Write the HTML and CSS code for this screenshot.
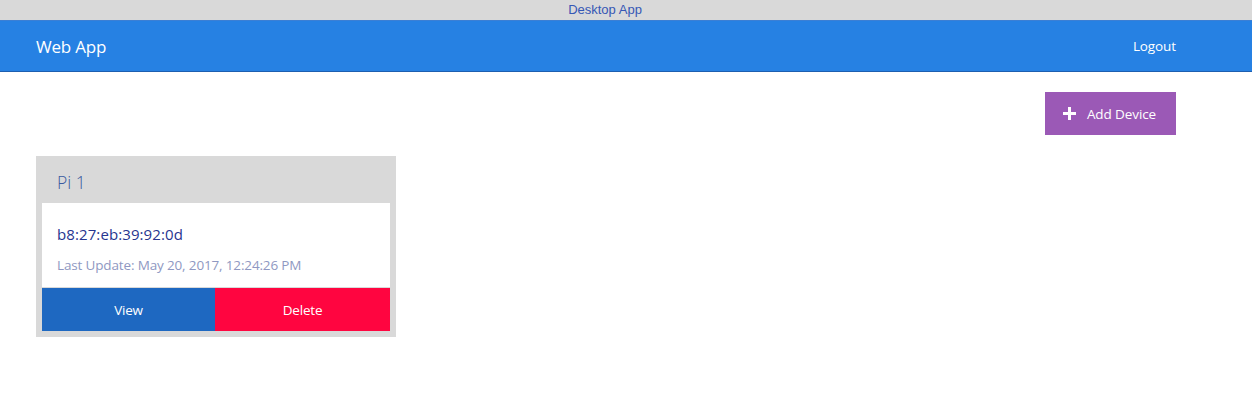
FILE: index.html
```html
<!DOCTYPE html>
<html>
<head>
<meta charset="utf-8">
<link rel="stylesheet" href="styles.css">
</head>
<body>
<div class="titlebar"><span>Desktop App</span></div>
<nav class="navbar">
  <span class="brand">Web App</span>
  <span class="logout">Logout</span>
</nav>
<main class="content">
  <div class="toolbar">
    <button class="add-btn">
      <svg width="13" height="13" viewBox="0 0 13 13"><path d="M5 0h3v5h5v3H8v5H5V8H0V5h5z" fill="#fff"/></svg>
      <span>Add Device</span>
    </button>
  </div>
  <div class="cards">
    <div class="card">
      <div class="card-title">Pi 1</div>
      <div class="card-body">
        <div class="mac">b8:27:eb:39:92:0d</div>
        <div class="updated">Last Update: May 20, 2017, 12:24:26 PM</div>
      </div>
      <div class="card-actions">
        <button class="btn view">View</button>
        <button class="btn delete">Delete</button>
      </div>
    </div>
  </div>
</main>
</body>
</html>
```
FILE: styles.css
```css
* { box-sizing: border-box; }
html, body { margin: 0; padding: 0; background: #fff; }
body { font-family: "Source Sans Pro", "Open Sans", "Noto Sans", sans-serif; }
.titlebar {
  height: 21px;
  background: #d9d9d9;
  border-bottom: 1px solid #3b7fd4;
  text-align: center;
  font-family: "Liberation Sans", Arial, sans-serif;
  font-size: 13px;
  line-height: 20px;
  color: #3557b5;
}
.titlebar span { position: relative; left: -21px; }
.navbar {
  height: 51px;
  background: #2681e3;
  border-bottom: 1px solid #1d5fb0;
  display: flex;
  align-items: center;
  justify-content: space-between;
  padding: 0 76px 0 36px;
  color: #fff;
}
.brand { font-size: 17px; letter-spacing: -0.2px; }
.logout { font-size: 13.5px; letter-spacing: -0.1px; }
.content { padding: 20px 76px 0 36px; }
.toolbar { display: flex; justify-content: flex-end; }
.add-btn {
  width: 131px;
  height: 43px;
  background: #9b59b6;
  border: 0;
  color: #fff;
  font-family: inherit;
  font-size: 13.5px;
  letter-spacing: -0.1px;
  display: flex;
  align-items: center;
  justify-content: center;
  gap: 11px;
  padding: 0 2px 0 0;
}
.cards { margin-top: 21px; display: flex; }
.card {
  width: 360px;
  background: #d9d9d9;
  padding: 0 6px 6px;
}
.card-title {
  height: 47px;
  padding: 5px 15px 0;
  display: flex;
  align-items: center;
  font-size: 17.5px;
  font-weight: 300;
  color: #3a5aa0;
}
.card-body {
  background: #fff;
  height: 84px;
  padding: 21px 15px 0;
}
.mac { font-size: 15px; color: #27358f; letter-spacing: 0.1px; }
.updated { font-size: 13.5px; color: #8f98c2; margin-top: 12px; letter-spacing: -0.15px; }
.card-actions { display: flex; margin-top: 1px; }
.btn {
  flex: 1;
  height: 43px;
  border: 0;
  color: #fff;
  font-family: inherit;
  font-size: 13.5px;
  letter-spacing: -0.2px;
}
.btn.view { background: #1e68c1; flex: 0 0 173px; }
.btn.delete { background: #ff0540; }
```
